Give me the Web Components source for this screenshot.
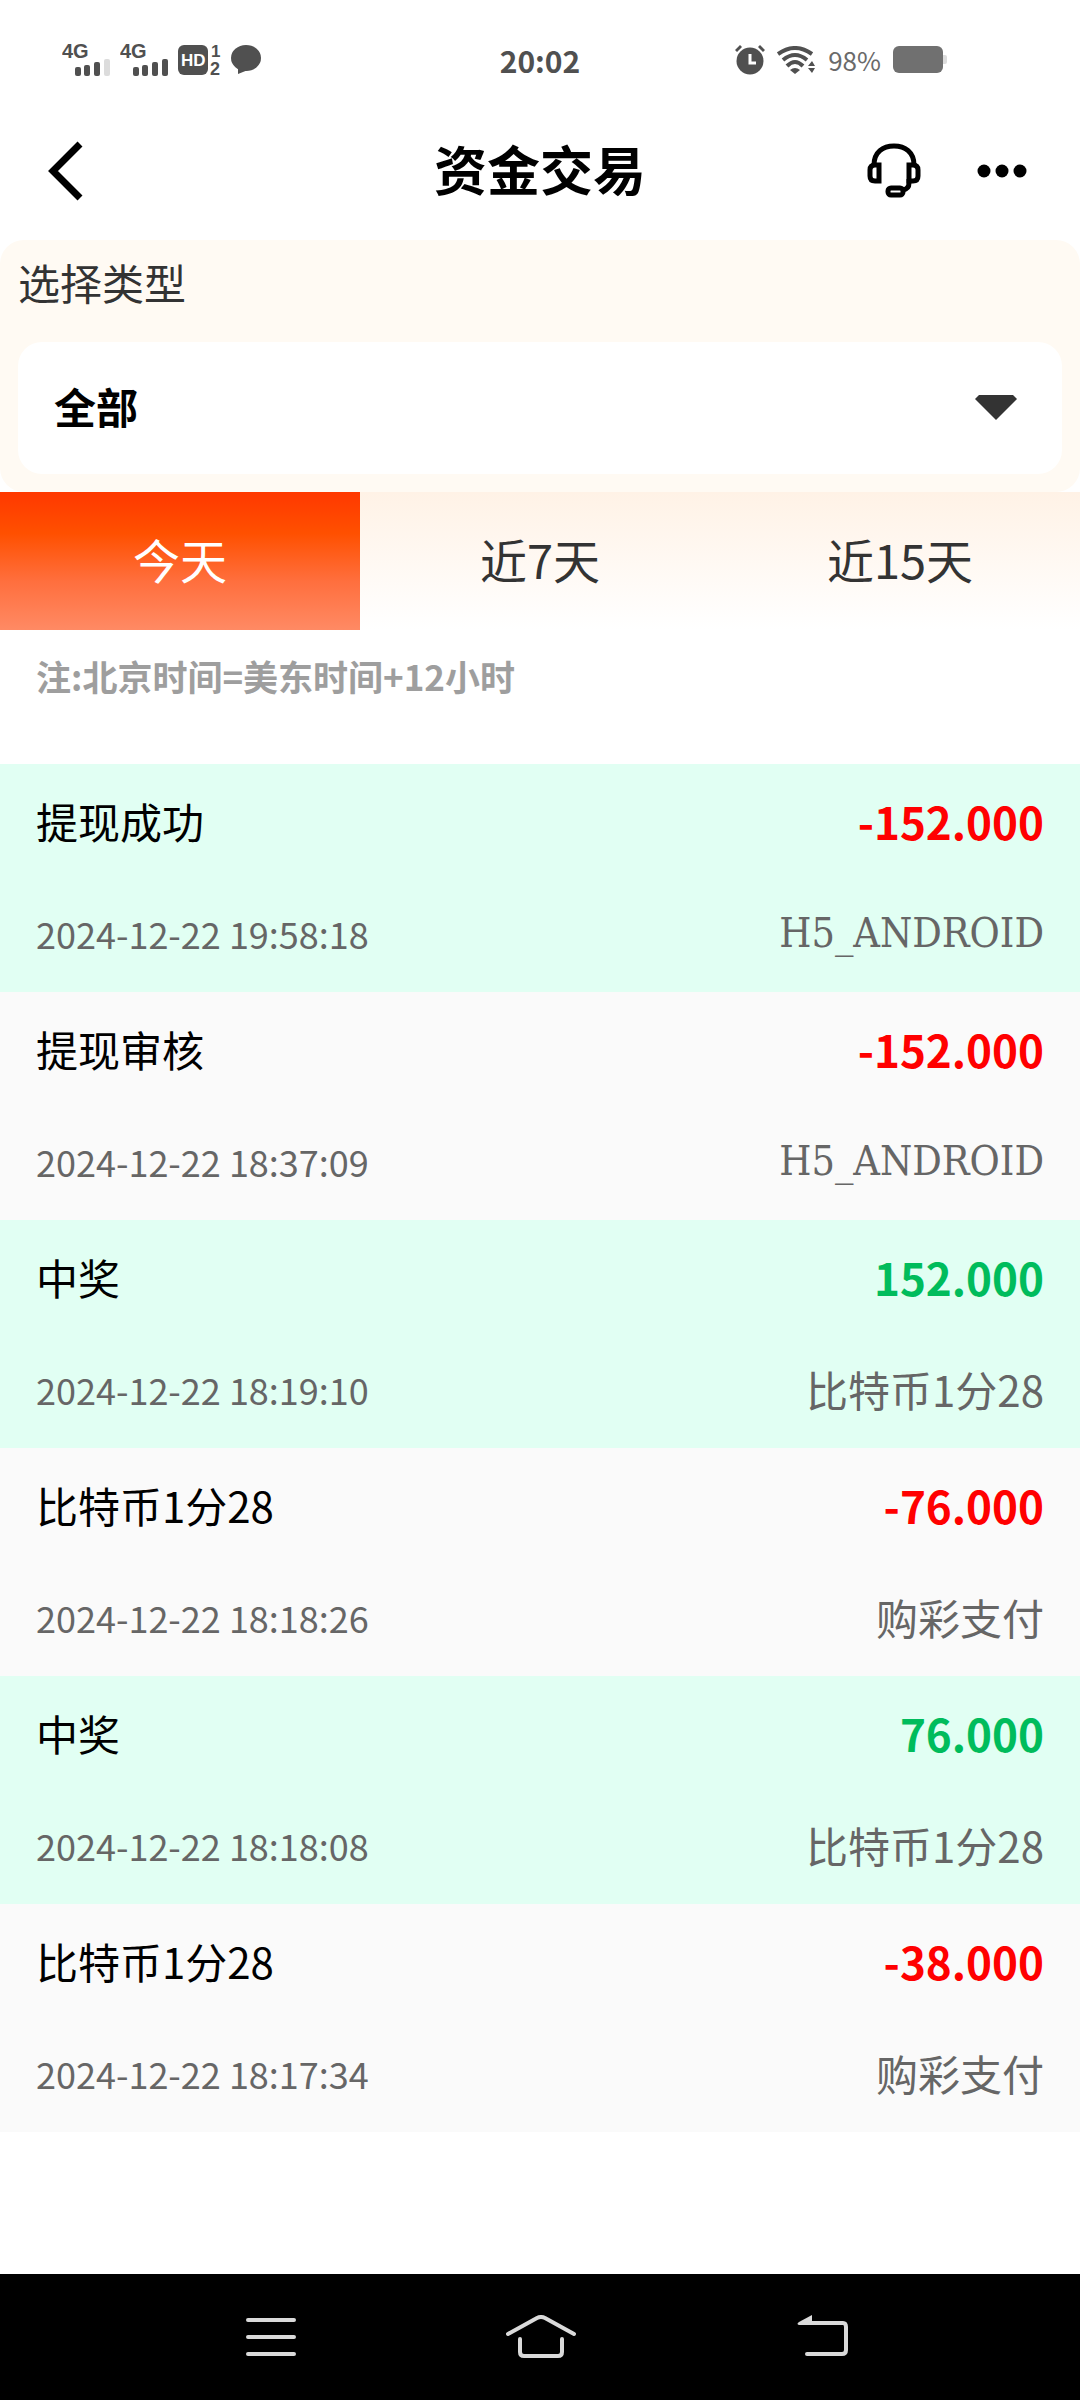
<!DOCTYPE html>
<html lang="zh-CN">
<head>
<meta charset="utf-8">
<meta name="viewport" content="width=device-width, initial-scale=1">
<title>资金交易</title>
<style>
  body {
    margin: 0;
    background: #fff;
    color: #000;
    font-family: "Noto Sans CJK SC", sans-serif;
    font-size: 42px;
    line-height: 56px;
  }
</style>
</head>
<body>
<funds-page>
  <status-bar slot="top" time="20:02" battery="98%"></status-bar>
  <page-header slot="top">资金交易</page-header>

  <type-picker label="选择类型"></type-picker>
  <day-tabs></day-tabs>
  <time-note>注:北京时间=美东时间+12小时</time-note>

  <record-list>
    <record-item>
      <span slot="name">提现成功</span><span slot="amount">-152.000</span>
      <time slot="time">2024-12-22 19:58:18</time><span slot="source">H5_ANDROID</span>
    </record-item>
    <record-item>
      <span slot="name">提现审核</span><span slot="amount">-152.000</span>
      <time slot="time">2024-12-22 18:37:09</time><span slot="source">H5_ANDROID</span>
    </record-item>
    <record-item income>
      <span slot="name">中奖</span><span slot="amount">152.000</span>
      <time slot="time">2024-12-22 18:19:10</time><span slot="source">比特币1分28</span>
    </record-item>
    <record-item>
      <span slot="name">比特币1分28</span><span slot="amount">-76.000</span>
      <time slot="time">2024-12-22 18:18:26</time><span slot="source">购彩支付</span>
    </record-item>
    <record-item income>
      <span slot="name">中奖</span><span slot="amount">76.000</span>
      <time slot="time">2024-12-22 18:18:08</time><span slot="source">比特币1分28</span>
    </record-item>
    <record-item>
      <span slot="name">比特币1分28</span><span slot="amount">-38.000</span>
      <time slot="time">2024-12-22 18:17:34</time><span slot="source">购彩支付</span>
    </record-item>
  </record-list>

  <system-nav slot="bottom"></system-nav>
</funds-page>

<script>
/**
 * Small base class: puts css() and template() into an open shadow root.
 */
class BaseComponent extends HTMLElement {
  constructor() {
    super();
    this.attachShadow({ mode: 'open' });
  }

  connectedCallback() {
    this.shadowRoot.innerHTML = `<style>${this.css()}</style>${this.template()}`;
  }

  css() {
    return '';
  }

  template() {
    return '<slot></slot>';
  }
}

// ---------------------------------------------------------------------------
// Page shell
// ---------------------------------------------------------------------------

class FundsPage extends BaseComponent {
  css() {
    return `
      :host { display: flex; flex-direction: column; min-height: 100vh; }
      main  { flex: 1; }
    `;
  }

  template() {
    return `<slot name="top"></slot><main><slot></slot></main><slot name="bottom"></slot>`;
  }
}

class StatusBar extends BaseComponent {
  css() {
    return `
      :host {
        display: grid; grid-template-columns: 1fr auto 1fr; align-items: center;
        height: 120px; color: #505050; fill: currentColor;
      }
      .left, .right { display: flex; align-items: center; gap: 10px; }
      .left  { padding-left: 62px; }
      .right { padding-right: 133px; gap: 12px; justify-content: flex-end; }
      .time  { font-size: 30px; font-weight: 700; }
      .level { font-size: 26px; color: #6a6a6a; }
      svg    { display: block; flex: none; }
      text   { font: 700 20px "Liberation Sans", sans-serif; }
      .faint { fill: #dcdcdc; }
    `;
  }

  signal(last) {
    return `
      <svg width="48" height="48" viewBox="0 -8 48 48" role="img" aria-label="4G">
        <text x="0" y="14">4G</text>
        <rect x="13" y="23" width="6" height="9" rx="2"/>
        <rect x="22" y="21" width="6" height="11" rx="2"/>
        <rect x="32" y="18" width="6" height="14" rx="2"/>
        <rect x="42" y="15" width="6" height="17" rx="2" class="${last}"/>
      </svg>`;
  }

  template() {
    return `
      <div class="left">
        ${this.signal('faint')}
        ${this.signal('')}
        <svg width="43" height="48" viewBox="0 -8 43 48" role="img" aria-label="HD">
          <rect x="0" y="1" width="30" height="30" rx="6"/>
          <text x="3" y="22" style="font-size:17px;fill:#fff">HD</text>
          <text x="33" y="13" style="font-size:17px">1</text>
          <text x="32" y="31" style="font-size:18px">2</text>
        </svg>
        <svg width="30" height="30" viewBox="0 0 30 30" aria-hidden="true">
          <ellipse cx="15" cy="13" rx="15" ry="13"/>
          <path d="M7 20v9l10-4z"/>
        </svg>
      </div>
      <span class="time">${this.getAttribute('time')}</span>
      <div class="right">
        <svg width="30" height="30" viewBox="0 0 30 30" aria-hidden="true">
          <circle cx="15" cy="16" r="13.500"/>
          <path d="M0 5l5-5 2 2-5 5zM30 5l-5-5-2 2 5 5z"/>
          <path d="M15 9v9h6" fill="none" stroke="#fff" stroke-width="3"/>
        </svg>
        <svg width="39" height="28" viewBox="0 0 39 28" aria-hidden="true">
          <g fill="none" stroke="currentColor" stroke-width="4">
            <path d="M1 8Q18-4 35 8"/>
            <path d="M6 14Q18 4 30 14"/>
            <path d="M10 20Q18 12 26 20"/>
          </g>
          <path d="M13 24q5-4 10 0l-5 4z"/>
          <path d="M31 20l4-5 3 5zM31 22h7l-3 5z"/>
        </svg>
        <span class="level">${this.getAttribute('battery')}</span>
        <svg width="54" height="28" viewBox="0 0 54 28" aria-hidden="true">
          <rect x="48" y="9" width="6" height="9" rx="2" class="faint"/>
          <rect width="50" height="27" rx="6" fill="#707070"/>
        </svg>
      </div>
    `;
  }
}

class PageHeader extends BaseComponent {
  css() {
    return `
      :host {
        display: grid; grid-template-columns: 1fr auto 1fr; align-items: center;
        height: 102px; margin-bottom: 18px; padding: 0 48px;
      }
      h1      { margin: 0; padding-bottom: 6px; font-size: 53px; line-height: 64px; font-weight: 700; }
      button  { padding: 0; border: 0; background: none; color: inherit; cursor: pointer; }
      svg     { display: block; fill: none; stroke: currentColor; stroke-width: 5; }
      .back   { justify-self: start; }
      .tools  { display: flex; align-items: center; justify-content: flex-end; gap: 56px; padding-right: 5px; }
    `;
  }

  template() {
    return `
      <button class="back" aria-label="返回">
        <svg width="36" height="60" viewBox="0 0 36 60"><path d="M32 3L5 30l27 27" stroke-width="7"/></svg>
      </button>
      <h1><slot></slot></h1>
      <div class="tools">
        <button aria-label="客服">
          <svg width="54" height="56" viewBox="0 0 54 56">
            <path d="M7 22C7 9 16 3 27 3s20 6 20 19"/>
            <path d="M12 22H8q-5 0-5 5v6q0 5 5 5h4z"/>
            <path d="M42 22h4q5 0 5 5v6q0 5-5 5h-4z"/>
            <path d="M42 36v4q0 6-6 7"/>
            <rect x="21" y="45" width="15" height="7" rx="3"/>
          </svg>
        </button>
        <button aria-label="更多">
          <svg width="50" height="14" viewBox="0 0 50 14">
            <g fill="currentColor" stroke="none">
              <circle cx="7" cy="7" r="6.500"/><circle cx="25" cy="7" r="6.500"/><circle cx="43" cy="7" r="6.500"/>
            </g>
          </svg>
        </button>
      </div>
    `;
  }
}

// ---------------------------------------------------------------------------
// Filters
// ---------------------------------------------------------------------------

class TypePicker extends BaseComponent {
  css() {
    return `
      :host {
        display: block; padding: 14px 18px 18px;
        border-radius: 24px; background: #fffaf3;
      }
      label  { display: block; margin-bottom: 32px; color: #333; }
      .field { display: grid; align-items: center; }
      select, svg { grid-area: 1 / 1; }
      select {
        width: 100%; height: 132px; padding: 0 36px 4px;
        border: 0; border-radius: 24px; background: #fff; color: #000;
        font: inherit; font-weight: 700; appearance: none;
      }
      svg { justify-self: end; margin-right: 45px; fill: #333; pointer-events: none; }
    `;
  }

  template() {
    return `
      <label for="type">${this.getAttribute('label')}</label>
      <div class="field">
        <select id="type"><option>全部</option></select>
        <svg width="42" height="26" viewBox="0 0 42 26" aria-hidden="true">
          <path d="M4 0h34l4 4-21 21L0 4z"/>
        </svg>
      </div>
    `;
  }
}

class DayTabs extends BaseComponent {
  css() {
    return `
      :host {
        display: grid; grid-template-columns: repeat(3, 1fr);
        background: linear-gradient(#fff2e6, #fff);
      }
      button {
        height: 138px; padding: 0 0 4px; border: 0; background: none;
        color: #333; font: inherit; font-size: 47px; cursor: pointer;
      }
      button[aria-selected="true"] {
        background: linear-gradient(#ff3800, #ff5000 30%, #ff6f3e 65%, #ff8a64);
        color: #fff;
      }
    `;
  }

  template() {
    return ['今天', '近7天', '近15天']
      .map((day, i) => `<button role="tab" aria-selected="${i === 0}">${day}</button>`)
      .join('');
  }

  connectedCallback() {
    super.connectedCallback();
    this.setAttribute('role', 'tablist');
    const tabs = this.shadowRoot.querySelectorAll('button');
    tabs.forEach((tab) => tab.addEventListener('click', () => {
      tabs.forEach((t) => t.setAttribute('aria-selected', t === tab));
    }));
  }
}

class TimeNote extends BaseComponent {
  css() {
    return `
      :host {
        display: block; padding: 18px 36px 60px;
        color: #9e9e9e; font-size: 35px; font-weight: 700;
      }
    `;
  }
}

// ---------------------------------------------------------------------------
// Records
// ---------------------------------------------------------------------------

class RecordList extends BaseComponent {
  css() {
    return `
      :host { display: block; }
      ::slotted(:nth-child(odd))  { background: #e1fff3; }
      ::slotted(:nth-child(even)) { background: #fafafa; }
    `;
  }

  connectedCallback() {
    super.connectedCallback();
    this.setAttribute('role', 'list');
  }
}

class RecordItem extends BaseComponent {
  css() {
    return `
      :host {
        display: grid; grid-template-columns: 1fr auto; grid-auto-rows: 56px;
        row-gap: 56px; padding: 29px 36px 31px;
      }
      .amount         { color: #ff0000; font-size: 44px; font-weight: 700; text-align: right; }
      .time, .source  { color: #666; }
      .time           { font-size: 36px; }
      .source         { text-align: right; }
      .latin          { font-family: "DejaVu Serif Condensed", serif; font-size: 41px; }
      :host([income]) .amount { color: #00bc5c; }
    `;
  }

  template() {
    const source = this.querySelector('[slot="source"]').textContent;
    const script = /^\w+$/.test(source) ? 'latin' : '';
    return `
      <div class="name"><slot name="name"></slot></div>
      <div class="amount"><slot name="amount"></slot></div>
      <div class="time"><slot name="time"></slot></div>
      <div class="source ${script}"><slot name="source"></slot></div>
    `;
  }

  connectedCallback() {
    super.connectedCallback();
    this.setAttribute('role', 'listitem');
  }
}

// ---------------------------------------------------------------------------
// Android navigation keys
// ---------------------------------------------------------------------------

class SystemNav extends BaseComponent {
  css() {
    return `
      :host {
        display: grid; grid-template-columns: repeat(3, 25%); justify-content: center;
        height: 126px; background: #000;
      }
      button { padding: 0; border: 0; background: none; color: #dadada; cursor: pointer; }
      svg {
        display: block; margin: auto; fill: none; stroke: currentColor;
        stroke-width: 4; stroke-linecap: round; stroke-linejoin: round;
      }
    `;
  }

  template() {
    return `
      <button aria-label="最近任务">
        <svg width="76" height="44" viewBox="0 0 76 44"><path d="M16 5h46M16 22h46M16 39h46"/></svg>
      </button>
      <button aria-label="主屏幕">
        <svg width="76" height="44" viewBox="0 0 76 44">
          <path d="M6 19L35 3q4-2 8 0l29 16"/>
          <path d="M18 24v13q0 4 4 4h34q4 0 4-4V24"/>
        </svg>
      </button>
      <button aria-label="返回键">
        <svg width="76" height="44" viewBox="0 0 76 44">
          <path d="M32 8h39q3 0 3 4v23q0 4-4 4H35"/>
          <path d="M40 0v10H27q-3-1 0-3z" fill="currentColor" stroke="none"/>
        </svg>
      </button>
    `;
  }
}

customElements.define('funds-page', FundsPage);
customElements.define('status-bar', StatusBar);
customElements.define('page-header', PageHeader);
customElements.define('type-picker', TypePicker);
customElements.define('day-tabs', DayTabs);
customElements.define('time-note', TimeNote);
customElements.define('record-list', RecordList);
customElements.define('record-item', RecordItem);
customElements.define('system-nav', SystemNav);
</script>
</body>
</html>
